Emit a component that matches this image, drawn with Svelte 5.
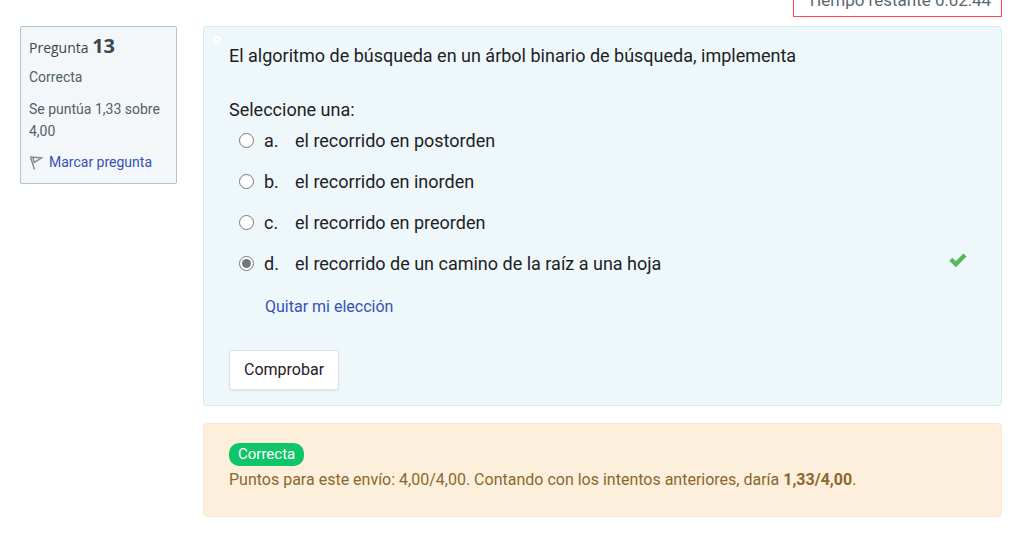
<script>
  const options = [
    { id: 'a', text: 'el recorrido en postorden' },
    { id: 'b', text: 'el recorrido en inorden' },
    { id: 'c', text: 'el recorrido en preorden' },
    { id: 'd', text: 'el recorrido de un camino de la raíz a una hoja' }
  ];
  let selected = $state('d');
  let flagged = $state(false);
</script>

<main class="quiz">
  <div class="timer-row">
    <div class="timer" role="timer">Tiempo restante 0:02:44</div>
  </div>

  <div class="question">
    <aside class="info">
      <h3 class="number">Pregunta <strong>13</strong></h3>
      <div class="state">Correcta</div>
      <div class="grade">Se puntúa 1,33 sobre 4,00</div>
      <a
        class="flag"
        href="#flag"
        onclick={(e) => {
          e.preventDefault();
          flagged = !flagged;
        }}
      >
        <svg width="14" height="16" viewBox="0 0 14 16" aria-hidden="true">
          <path
            d="M1.5 3 5.5 15.5M1 3 12.5 3.8 5.3 8.5 3.8 3.5"
            fill={flagged ? '#d9534f' : 'none'}
            stroke="#858585"
            stroke-width="1.4"
          />
        </svg>
        <span>Marcar pregunta</span>
      </a>
    </aside>

    <div class="content">
      <form class="formulation" onsubmit={(e) => e.preventDefault()}>
        <span class="marker" aria-hidden="true"></span>
        <p class="text">El algoritmo de búsqueda en un árbol binario de búsqueda, implementa</p>
        <fieldset>
          <legend>Seleccione una:</legend>
          {#each options as option}
            <div class="option">
              <input type="radio" name="answer" id={'answer-' + option.id} value={option.id} bind:group={selected} />
              <label for={'answer-' + option.id}>
                <span class="letter">{option.id}.</span>
                <span>{option.text}</span>
              </label>
              {#if option.id === 'd'}
                <svg class="check" width="18" height="14" viewBox="0 0 18 14" aria-hidden="true">
                  <path d="M1.8 6.3 6.8 11.2 16 2" fill="none" stroke="#5cb85c" stroke-width="4.4" />
                </svg>
              {/if}
            </div>
          {/each}
        </fieldset>
        <a
          class="clear"
          href="#clear"
          onclick={(e) => {
            e.preventDefault();
            selected = '';
          }}>Quitar mi elección</a
        >
        <button type="submit">Comprobar</button>
      </form>

      <div class="outcome">
        <span class="badge">Correcta</span>
        <p>Puntos para este envío: 4,00/4,00. Contando con los intentos anteriores, daría <strong>1,33/4,00</strong>.</p>
      </div>
    </div>
  </div>
</main>

<style>
  :global(body) {
    background: #fff;
  }
  .quiz {
    box-sizing: border-box;
    margin-top: -25px;
    padding: 0 31px 20px 20px;
    font-family: Roboto, sans-serif;
    color: #1d2125;
  }
  .timer-row {
    display: flex;
    justify-content: flex-end;
    margin-bottom: 9px;
  }
  .timer {
    padding: 12px 10px 4px 13px;
    border: 1px solid #ff4a50;
    color: #5b6770;
    font-size: 17px;
    line-height: 24px;
  }
  .question {
    display: grid;
    grid-template-columns: 157px minmax(0, 1fr);
    gap: 26px;
    align-items: start;
  }
  .info {
    padding: 8px;
    padding-bottom: 10px;
    border: 1px solid #b4c3cc;
    border-radius: 2px;
    background: #f3f7fa;
    color: #545e66;
    font-size: 14px;
    line-height: 22px;
  }
  .number {
    margin: 0 0 8px;
    color: #3c464e;
    font-family: 'Open Sans', sans-serif;
    font-size: 14px;
    font-weight: 400;
    line-height: 21px;
  }
  .number strong {
    font-size: 20px;
    font-weight: 700;
  }
  .state {
    margin-bottom: 10px;
  }
  .grade {
    margin-bottom: 9px;
  }
  a {
    color: #3751b5;
    text-decoration: none;
  }
  .flag {
    display: flex;
    align-items: center;
    gap: 6px;
  }
  .content {
    display: grid;
    gap: 17px;
  }
  .formulation {
    position: relative;
    padding: 15px 25px;
    border: 1px solid #cdeef3;
    border-radius: 4px;
    background: #eef8fb;
    font-size: 18px;
    line-height: 27px;
  }
  .marker {
    position: absolute;
    top: 9px;
    left: 9px;
    box-sizing: border-box;
    width: 8px;
    height: 7px;
    border: 2px solid #fff;
    border-radius: 50%;
  }
  .text {
    margin: 0 0 27px;
  }
  fieldset {
    margin: 0;
    padding: 0;
    border: 0;
  }
  legend {
    padding: 0;
  }
  .option {
    display: flex;
    align-items: center;
    height: 27px;
    margin: 4px 0 14px;
  }
  .option input {
    flex: none;
    width: 15px;
    height: 15px;
    margin: 0 10px;
    accent-color: #767676;
  }
  label {
    display: flex;
  }
  .letter {
    width: 31px;
  }
  .check {
    margin-left: auto;
    margin-right: 9px;
    margin-bottom: 8px;
  }
  .clear {
    display: block;
    width: max-content;
    margin: 0 0 30px 36px;
    padding-top: 2px;
    font-size: 16px;
  }
  button {
    display: block;
    padding: 7px 14px;
    border: 1px solid #dee2e6;
    border-radius: 3px;
    background: #fff;
    box-shadow: 0 1px 2px rgba(0, 0, 0, 0.08);
    color: #1d2125;
    font-family: inherit;
    font-size: 16px;
    line-height: 24px;
  }
  .outcome {
    padding: 19px 25px 24px;
    border: 1px solid #fbe7cd;
    border-radius: 4px;
    background: #fcefdc;
    color: #8e662e;
    font-size: 16px;
    line-height: 24px;
  }
  .badge {
    display: block;
    width: max-content;
    padding: 0 9px;
    border-radius: 10px;
    background: #10c469;
    color: #fff;
    font-size: 15px;
    line-height: 23px;
  }
  .outcome p {
    margin: 2px 0 0;
  }
</style>
